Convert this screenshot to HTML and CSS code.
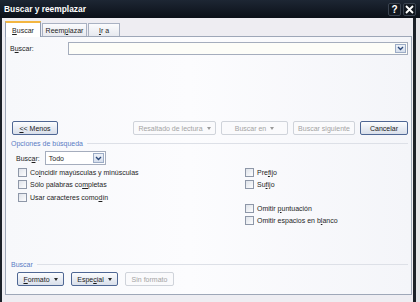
FILE: index.html
```html
<!DOCTYPE html>
<html>
<head>
    <title>Buscar y reemplazar</title>
    <link rel="stylesheet" href="styles.css">
</head>
<body>
    <div class="titlebar">
        <span class="title">Buscar y reemplazar</span>
        <div class="caption">
            <span class="cap">?</span>
            <span class="cap">
                <svg width="9" height="9" viewBox="0 0 9 9"><path d="M1 1L8 8M8 1L1 8" stroke="#fff" stroke-width="1.8"/></svg>
            </span>
        </div>
    </div>

    <div class="frame">
        <div class="tabs">
            <div class="tab active"><span><u>B</u>uscar</span></div>
            <div class="tab wide"><span>Reem<u>p</u>lazar</span></div>
            <div class="tab narrow"><span><u>I</u>r a</span></div>
        </div>

        <div class="panel">
            <div class="find-row">
                <span class="find-label">B<u>u</u>scar:</span>
                <div class="combo">
                    <span class="combo-btn">
                        <svg width="7" height="5" viewBox="0 0 7 5"><path d="M1 1L3.5 3.5L6 1" fill="none" stroke="#2d4a7a" stroke-width="1.4"/></svg>
                    </span>
                </div>
            </div>

            <div class="button-row">
                <span class="btn strong menos"><span><u>&lt;</u>&lt; Menos</span></span>
                <div class="btn-group">
                    <span class="btn off resaltado"><span>Resaltado de lectura</span><i class="arrow"></i></span>
                    <span class="btn off buscar-en"><span>Buscar en</span><i class="arrow"></i></span>
                    <span class="btn off siguiente"><span>Buscar siguiente</span></span>
                    <span class="btn strong cancelar"><span>Cancelar</span></span>
                </div>
            </div>

            <div class="group"><span>Opciones de búsqueda</span></div>

            <div class="options">
                <div class="col left">
                    <div class="select-row">
                        <span>Busc<u>a</u>r:</span>
                        <div class="select">
                            <span class="select-text">Todo</span>
                            <span class="combo-btn">
                                <svg width="7" height="5" viewBox="0 0 7 5"><path d="M1 1L3.5 3.5L6 1" fill="none" stroke="#2d4a7a" stroke-width="1.4"/></svg>
                            </span>
                        </div>
                    </div>
                    <div class="check"><span class="box"></span><span>Co<u>i</u>ncidir mayúsculas y minúsculas</span></div>
                    <div class="check"><span class="box"></span><span>Sólo palabras co<u>m</u>pletas</span></div>
                    <div class="check"><span class="box"></span><span>Usar caracteres como<u>d</u>ín</span></div>
                </div>
                <div class="col right">
                    <div class="check"><span class="box"></span><span>Pre<u>f</u>ijo</span></div>
                    <div class="check"><span class="box"></span><span>Su<u>f</u>ijo</span></div>
                    <div class="check spaced"><span class="box"></span><span>Omitir <u>p</u>untuación</span></div>
                    <div class="check"><span class="box"></span><span>Omitir espacios en b<u>l</u>anco</span></div>
                </div>
            </div>

            <div class="group"><span>Buscar</span></div>

            <div class="bottom-row">
                <span class="btn strong formato"><span><u>F</u>ormato</span><i class="arrow dark"></i></span>
                <span class="btn strong especial"><span>Espe<u>c</u>ial</span><i class="arrow dark"></i></span>
                <span class="btn off sin"><span>Sin formato</span></span>
            </div>
        </div>
    </div>
</body>
</html>
```

FILE: styles.css
```css
* {
    box-sizing: border-box;
}
body {
    margin: 0;
    width: 420px;
    height: 302px;
    overflow: hidden;
    background: #e4e4e8;
    font-family: "Liberation Sans", Arial, sans-serif;
    font-size: 7px;
    color: #1e1e1e;
}
u {
    text-decoration-thickness: 1px;
    text-underline-offset: 1px;
}

/* title bar */
.titlebar {
    height: 18px;
    display: flex;
    align-items: center;
    justify-content: space-between;
    background: linear-gradient(#1d2633, #0b1018);
    color: #fff;
}
.title {
    padding-left: 4px;
    font-size: 8.4px;
    font-weight: bold;
}
.caption {
    display: flex;
    gap: 2px;
    padding-right: 4px;
}
.cap {
    width: 13px;
    height: 13px;
    display: flex;
    align-items: center;
    justify-content: center;
    border: 1px solid #3a4350;
    border-radius: 2px;
    background: #121820;
    font-size: 10px;
    font-weight: bold;
}

/* dialog frame */
.frame {
    width: 416px;
    height: 284px;
    border-left: 2px solid #1b2028;
    border-right: 3px solid #1b2028;
    background: #eeedf2;
    padding: 3px 1px 0 3px;
}
.tabs {
    display: flex;
    align-items: flex-end;
    height: 15px;
    gap: 1px;
}
.tab {
    height: 13px;
    width: 36px;
    display: flex;
    align-items: center;
    justify-content: center;
    border: 1px solid #a9b1c2;
    border-bottom: none;
    background: linear-gradient(#fbfbfd, #e7e9ef);
}
.tab.wide {
    width: 45px;
}
.tab.narrow {
    width: 32px;
}
.tab.active {
    height: 16px;
    margin-bottom: -1px;
    border-color: #8f9bb0;
    border-top: 2px solid #f3b640;
    background: #fff;
    position: relative;
}

.panel {
    height: 259px;
    border: 1px solid #9ea7b8;
    background: linear-gradient(to right, #f7f8fb, #fcfcfe 45%, #f4f5f9);
    display: flex;
    flex-direction: column;
}

.find-row {
    display: flex;
    align-items: center;
    margin-top: 5px;
    padding: 0 3px 0 4px;
}
.find-label {
    width: 58px;
}
.combo {
    flex: 1;
    height: 13px;
    border: 1px solid #a5adbd;
    background: #fdfdf8;
    display: flex;
    justify-content: flex-end;
    padding: 1px;
}
.combo-btn {
    width: 11px;
    height: 100%;
    display: flex;
    align-items: center;
    justify-content: center;
    border: 1px solid #9cacc6;
    background: linear-gradient(#eef2f8, #d5deec);
}

/* buttons */
.button-row {
    display: flex;
    margin-top: 66px;
    padding: 0 3px 0 6px;
}
.btn-group {
    display: flex;
    gap: 5px;
    margin-left: auto;
}
.btn {
    height: 14px;
    display: flex;
    align-items: center;
    justify-content: center;
    gap: 4px;
    border-radius: 2px;
}
.btn.strong {
    border: 1px solid #4f6794;
    background: linear-gradient(#fcfdfe, #e9edf4 50%, #d9dfea);
    color: #1a1a1a;
}
.btn.off {
    border: 1px solid #cfd3da;
    background: #fafafc;
    color: #a3a3a3;
}
.menos { width: 46px; }
.resaltado { width: 83px; }
.buscar-en { width: 67px; }
.siguiente { width: 62px; }
.cancelar { width: 48px; }
.formato { width: 47px; }
.especial { width: 47px; }
.sin { width: 49px; }

.arrow {
    width: 0;
    height: 0;
    border-left: 2.5px solid transparent;
    border-right: 2.5px solid transparent;
    border-top: 3px solid #9a9a9a;
}
.arrow.dark {
    border-top-color: #2a2a2a;
}

/* groups */
.group {
    display: flex;
    align-items: center;
    height: 10px;
    margin-top: 3px;
    padding: 0 3px 0 5px;
    color: #5a7cc4;
}
.group::after {
    content: "";
    flex: 1;
    height: 1px;
    margin-left: 4px;
    background: #dde0e7;
}

.options {
    height: 108px;
    display: flex;
    padding-top: 3px;
}
.col.left {
    width: 237px;
    padding-left: 10px;
}
.select-row {
    display: flex;
    align-items: center;
    gap: 5px;
    height: 14px;
    margin-bottom: 1px;
}
.select {
    width: 61px;
    height: 14px;
    border: 1px solid #a5adbd;
    background: #fff;
    display: flex;
    align-items: center;
    padding: 1px;
}
.select-text {
    flex: 1;
    padding-left: 2px;
}
.check {
    display: flex;
    align-items: center;
    gap: 3px;
    height: 12.5px;
    padding-left: 2px;
}
.box {
    width: 9px;
    height: 9px;
    border: 1px solid #8e97a8;
    background: linear-gradient(135deg, #dfe3ea, #fdfdfe);
}
.col.right {
    padding-top: 15px;
}
.check.spaced {
    margin-top: 11px;
}

.bottom-row {
    display: flex;
    gap: 7px;
    margin-top: 3px;
    padding-left: 11px;
}
```
